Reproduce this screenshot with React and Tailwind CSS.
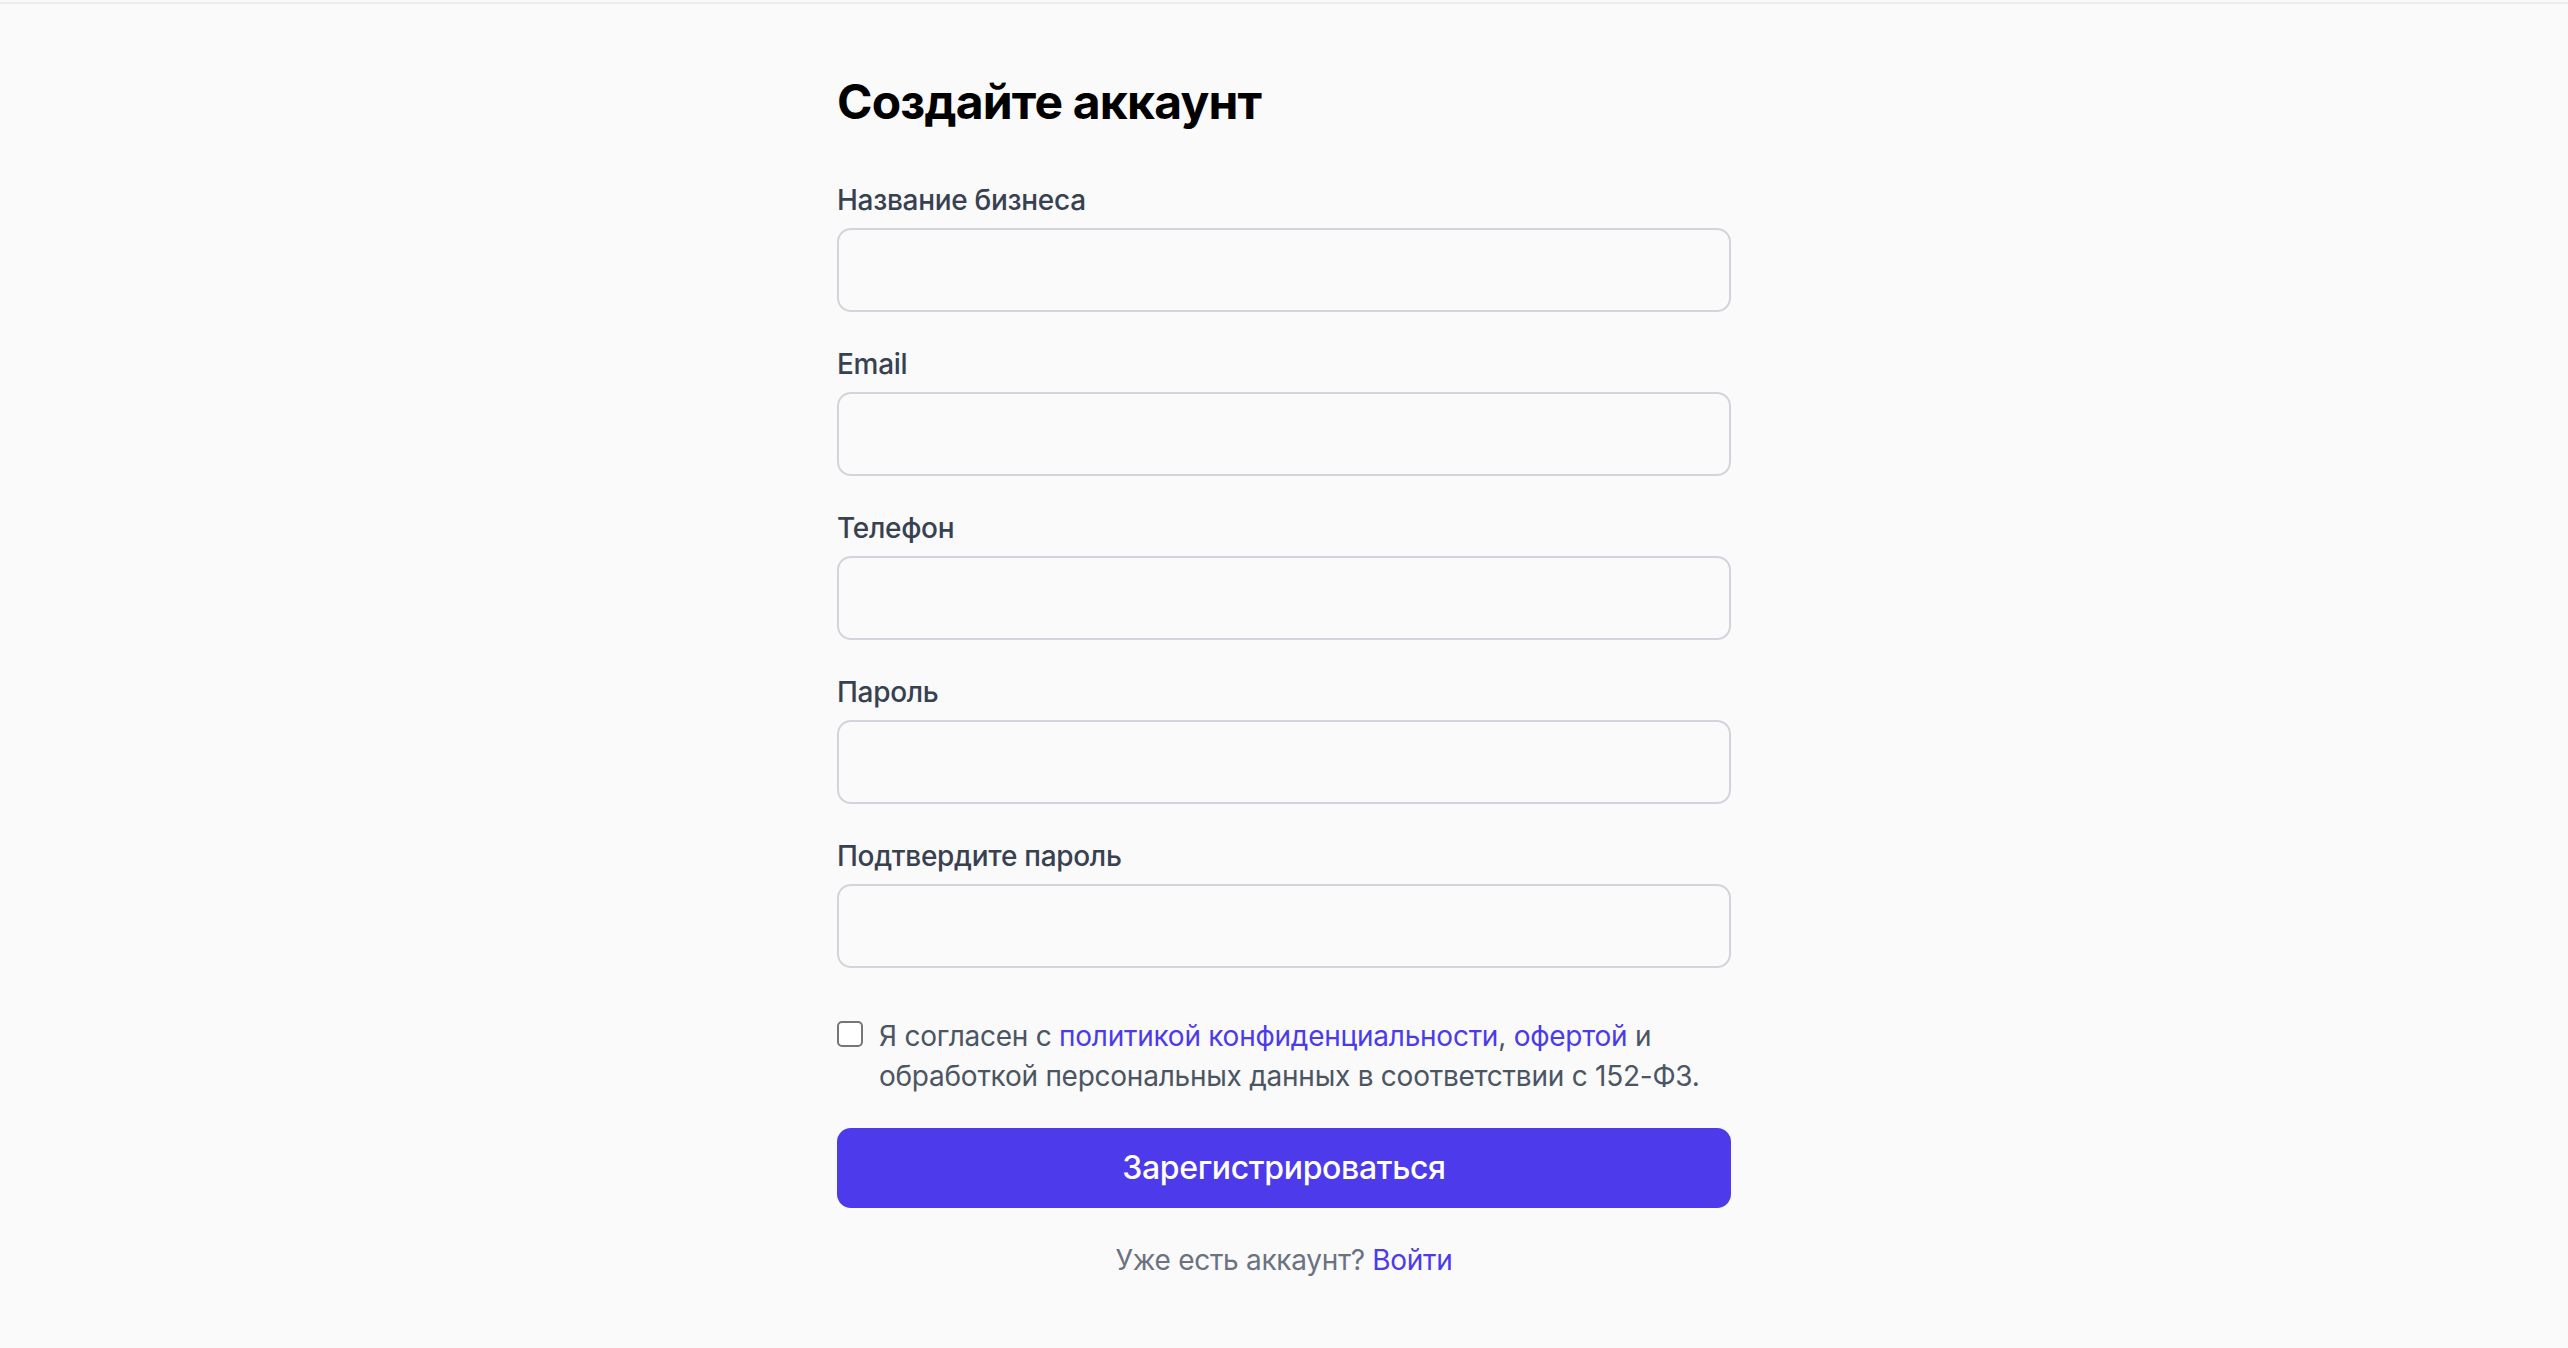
const fields = [
  { label: "Название бизнеса", type: "text" },
  { label: "Email", type: "email" },
  { label: "Телефон", type: "tel" },
  { label: "Пароль", type: "password" },
  { label: "Подтвердите пароль", type: "password" },
];

function Field({ label, type }) {
  return (
    <div>
      <label className="block text-[28px] leading-[40px] font-medium tracking-[-0.3px] text-[#374151] mb-[8px]">
        {label}
      </label>
      <input
        type={type}
        className="block w-full h-[84px] px-[24px] bg-transparent border-2 border-[#d1d5db] rounded-[14px] text-[32px] outline-none"
      />
    </div>
  );
}

export default function App() {
  return (
    <div className="min-h-screen bg-[#fafafa] pt-[2px]" style={{ fontFamily: "Inter, 'Noto Sans', sans-serif" }}>
      <div className="min-h-screen border-t-2 border-[#ebebf0]">
        <div className="w-[894px] mx-auto pt-[66px] pb-[40px]">
          <h1 className="text-[48px] leading-[64px] font-bold tracking-[-0.8px] text-black mb-[46px]">
            Создайте аккаунт
          </h1>

          <div className="flex flex-col gap-[32px]">
            {fields.map((f) => (
              <Field key={f.label} {...f} />
            ))}
          </div>

          <label className="flex items-start mt-[48px]">
            <input
              type="checkbox"
              className="appearance-none shrink-0 w-[26px] h-[26px] mt-[5px] border-2 border-[#767676] rounded-[5px] bg-white"
            />
            <span className="ml-[16px] text-[28px] leading-[40px] tracking-[-0.25px] text-[#4b5563]">
              Я согласен с <a className="text-[#4c3aeb]">политикой конфиденциальности</a>,{" "}
              <a className="text-[#4c3aeb]">офертой</a> и обработкой персональных данных в соответствии с 152-ФЗ.
            </span>
          </label>

          <button className="mt-[32px] w-full h-[80px] rounded-[14px] bg-[#4c3aeb] text-white text-[32px] font-medium tracking-[-0.35px]">
            Зарегистрироваться
          </button>

          <p className="mt-[32px] text-center text-[28px] leading-[40px] tracking-[-0.3px] text-[#6b7280]">
            Уже есть аккаунт? <a className="text-[#4c3aeb]">Войти</a>
          </p>
        </div>
      </div>
    </div>
  );
}
